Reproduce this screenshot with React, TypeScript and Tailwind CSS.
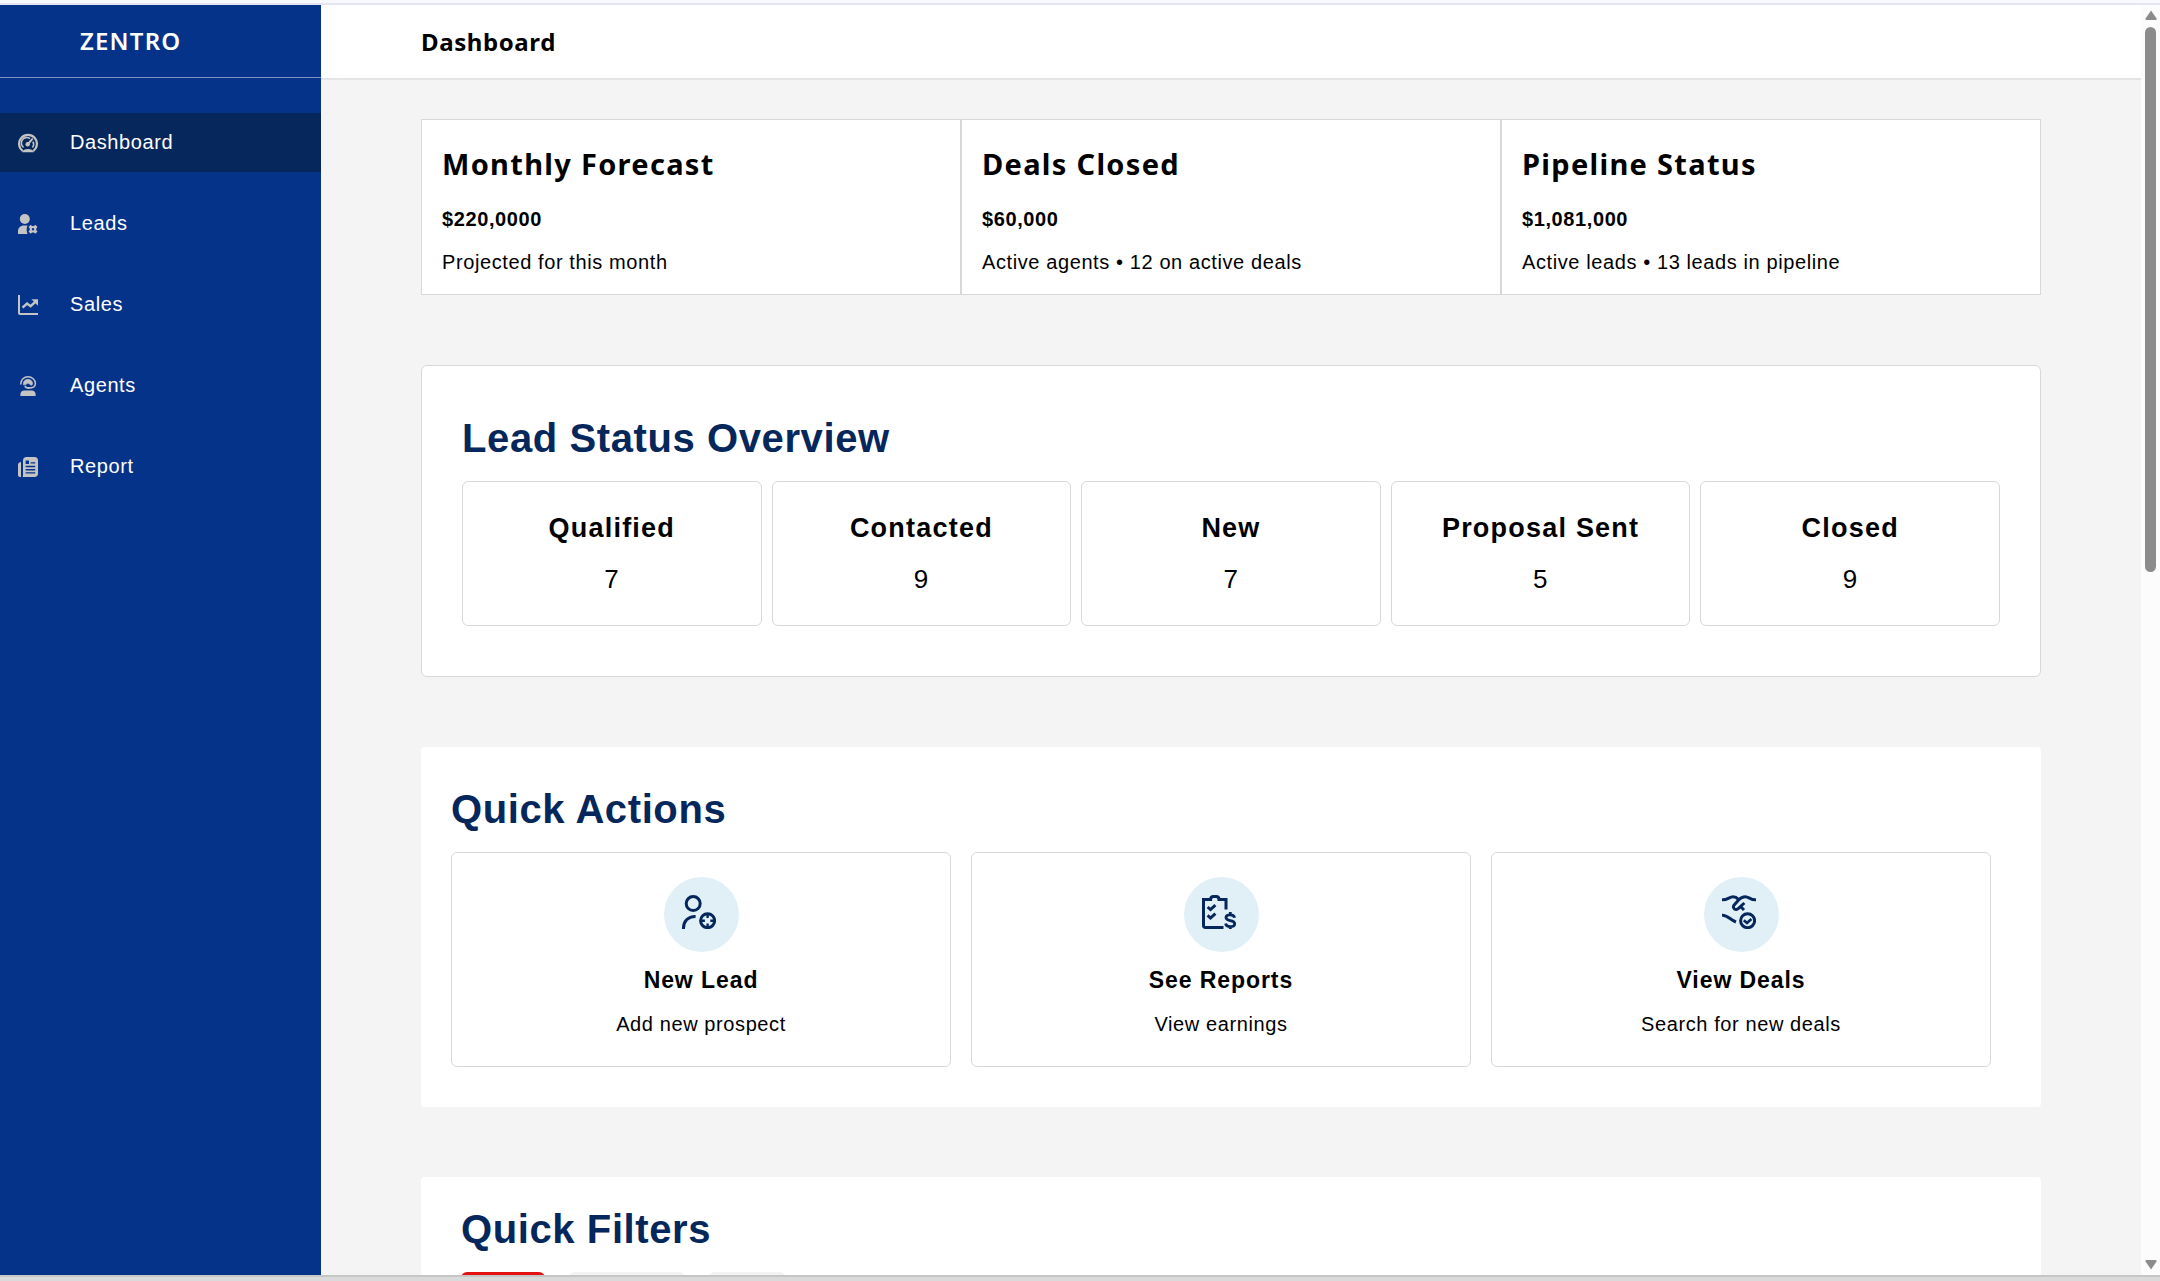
import type { ReactNode } from "react";

const GaugeIcon = () => (
  <svg viewBox="0 0 20 20" className="size-5" fill="none" stroke="currentColor" strokeWidth="2.2">
    <path d="M4.600 17.800A8.900 8.900 0 1 1 15.400 17.800" />
    <path d="M5.600 14.400A5.400 5.400 0 0 1 12 5.600M15 8.600A5.400 5.400 0 0 1 14.400 14.400" strokeWidth="1.600" />
    <path d="M10 11L14.200 6.200" strokeLinecap="round" strokeWidth="2" />
    <circle cx="9.700" cy="11.300" r="2.200" fill="currentColor" stroke="none" />
    <path d="M4 19.300C5.200 15 14.800 15 16 19.300Z" fill="currentColor" stroke="none" />
  </svg>
);

const LeadIcon = () => (
  <svg viewBox="0 0 20 20" className="size-5" fill="currentColor">
    <circle cx="6.800" cy="5" r="5" />
    <path d="M0 20V17.400C0 14 2.400 11.600 5.800 11.600H9.400C8.400 14.200 8.400 17.600 9.600 20Z" />
    <path
      d="M11.600 11.900L14 14.300M16 16.300L18.400 18.700M18.400 11.900L16 14.300M14 16.300L11.600 18.700"
      stroke="currentColor"
      strokeWidth="3.200"
    />
    <circle cx="15" cy="15.300" r="2.300" fill="none" stroke="currentColor" strokeWidth="2" />
  </svg>
);

const SalesIcon = () => (
  <svg viewBox="0 0 20 20" className="size-5" fill="none" stroke="currentColor" strokeWidth="2">
    <path d="M1 0V18Q1 19 2 19H20" />
    <path d="M4.500 12.600L9 8.600L12.600 11.200L17.600 6.600" strokeWidth="2.400" />
    <path d="M13.400 4.200H20V10.800Z" fill="currentColor" stroke="none" />
  </svg>
);

const AgentIcon = () => (
  <svg viewBox="0 0 20 20" className="size-5" fill="none" stroke="currentColor" strokeWidth="1.500" strokeLinecap="round">
    <path d="M2.800 8C2.800 3.600 6 .8 10 .8S17.400 3.800 17.400 7.400S14.800 12 10.600 12" />
    <path d="M5.400 8.400C5.200 5 7.200 3.600 10 3.600S14.800 5.200 14.400 8.400C13.600 9.400 12.800 9.200 11.800 8.200C10.400 6.800 8.800 6.800 7.600 8.800Z" fill="currentColor" strokeWidth=".8" />
    <path d="M7.400 10.800C8.400 11.800 9.400 12 10.600 12" strokeWidth="1.900" />
    <path d="M2.400 20V18.400C2.400 16 4 14.400 6.400 14.400H13.600C16 14.400 17.600 16 17.600 18.400V20Z" fill="currentColor" stroke="none" />
  </svg>
);

const ReportIcon = () => (
  <svg viewBox="0 0 20 20" className="size-5" fill="currentColor">
    <path d="M3 5V20H2C.8 20 0 19.200 0 18V8C0 6.400 1.200 5 3 5Z" />
    <path fillRule="evenodd" d="M8.400 0H16.600C18.800 0 20 1.400 20 3.400V16.600C20 18.800 18.800 20 16.600 20H4.600C5 19.400 5 18.800 5 18V3.400C5 1.400 6.400 0 8.400 0ZM7.600 3.400V7H11V3.400ZM12.600 5.200V6.600H17.200V5.200ZM7.600 8.800V10.200H17.200V8.800ZM7.600 12V13.400H17.200V12ZM7.600 15.200V16.600H17.200V15.200Z" />
  </svg>
);

const NewLeadIcon = () => (
  <svg viewBox="0 0 34 34" className="size-[34px]" fill="none" stroke="currentColor" strokeWidth="3">
    <circle cx="11.200" cy="8.600" r="7" />
    <path d="M1.500 34C1.200 26.500 6 21.200 13.600 21.400" />
    <circle cx="25.600" cy="25.700" r="7" />
    <path d="M25.600 18.700V23M25.600 28.400V32.700M18.600 25.700H22.900M28.300 25.700H32.600" strokeWidth="2.400" />
  </svg>
);

const ReportsIcon = () => (
  <svg viewBox="0 0 34 34" className="size-[34px]" fill="none" stroke="currentColor" strokeWidth="3">
    <path d="M21.500 32.500H3.400Q1.500 32.500 1.500 30.500V4.600H8.600C8.600 2.600 9.800 1.500 11.400 1.500H14.200C16 1.500 17 2.600 17 4.600H24V14.400" />
    <path d="M5.600 12L8.500 14.600L13.400 10.200M5.600 20.400L8.500 23L13.400 18.600" />
    <path d="M32.600 22.800C32.200 20.600 30.600 19.800 28.200 19.800C25.600 19.800 24 20.800 24 22.600C24 27 32.700 24 32.700 28.700C32.700 30.800 30.800 31.700 28.300 31.700C25.600 31.700 24 30.800 23.600 28.500M28.300 17V20M28.300 31.400V34" strokeWidth="2.800" />
  </svg>
);

const DealsIcon = () => (
  <svg viewBox="0 0 34 34" className="size-[34px]" fill="none" stroke="currentColor" strokeWidth="3">
    <path d="M0 4.800C5.400 5.200 7.400 1.700 11 1.700C13.400 1.700 15 2.800 16.600 4.600" />
    <path d="M34 4.800C28.600 5.200 27 1.700 23.200 1.700C20.400 1.700 18.400 3 16.800 4.800L12 10.200C10.600 12 12 14.800 14.400 14.600C16 14.400 16.600 13.200 22.400 8" />
    <path d="M18 11L22 15" />
    <path d="M0 20.200C5.400 19.800 8 24.600 14 27" />
    <circle cx="25.600" cy="25.700" r="7" />
    <path d="M21.800 25.200L25 28L29.400 24" strokeWidth="2.600" />
  </svg>
);

const navItems: { label: string; icon: ReactNode }[] = [
  { label: "Dashboard", icon: <GaugeIcon /> },
  { label: "Leads", icon: <LeadIcon /> },
  { label: "Sales", icon: <SalesIcon /> },
  { label: "Agents", icon: <AgentIcon /> },
  { label: "Report", icon: <ReportIcon /> },
];

const stats = [
  { title: "Monthly Forecast", value: "$220,0000", note: "Projected for this month" },
  { title: "Deals Closed", value: "$60,000", note: "Active agents • 12 on active deals" },
  { title: "Pipeline Status", value: "$1,081,000", note: "Active leads • 13 leads in pipeline" },
];

const statuses = [
  { label: "Qualified", count: 7 },
  { label: "Contacted", count: 9 },
  { label: "New", count: 7 },
  { label: "Proposal Sent", count: 5 },
  { label: "Closed", count: 9 },
];

const actions: { title: string; note: string; icon: ReactNode }[] = [
  { title: "New Lead", note: "Add new prospect", icon: <NewLeadIcon /> },
  { title: "See Reports", note: "View earnings", icon: <ReportsIcon /> },
  { title: "View Deals", note: "Search for new deals", icon: <DealsIcon /> },
];

function Sidebar() {
  return (
    <aside className="w-[321px] shrink-0 bg-[#06338a] text-white">
      <div className="flex h-[73px] items-center border-b border-[#8194c0] pl-20 font-['Noto_Sans'] text-2xl font-semibold tracking-wider">
        ZENTRO
      </div>
      <nav className="mt-[35px] flex flex-col gap-[22px]">
        {navItems.map((item, i) => (
          <a
            key={item.label}
            href="#"
            className={`flex h-[59px] items-center gap-8 pl-[18px] ${i === 0 ? "bg-[#06275b]" : ""}`}
          >
            <span className="text-[#c4c4c4]">{item.icon}</span>
            <span className="pb-0.5">{item.label}</span>
          </a>
        ))}
      </nav>
    </aside>
  );
}

function ScrollTrack() {
  return (
    <div className="flex w-[19px] shrink-0 flex-col items-center bg-[#fcfcfc] py-[5px]" aria-hidden="true">
      <svg viewBox="0 0 12 10" className="h-2.5 w-3" fill="#8b8b8b">
        <path d="M6 0.500L11.500 8.500Q12 10 10.500 10H1.500Q0 10 .5 8.500Z" />
      </svg>
      <div className="mt-[7px] h-[545px] w-[11px] rounded-full bg-[#8b8b8b]" />
      <svg viewBox="0 0 12 10" className="mt-auto h-2.5 w-3" fill="#8b8b8b">
        <path d="M6 9.500L.5 1.500Q0 0 1.500 0H10.500Q12 0 11.500 1.500Z" />
      </svg>
    </div>
  );
}

export default function App() {
  return (
    <div className="flex h-screen flex-col overflow-hidden bg-white font-['Liberation_Sans',sans-serif] text-xl/7 tracking-[0.03em] text-black">
      <div className="h-[5px] shrink-0 border-b-2 border-[#e4e5f1] bg-[#f8f9fe]" />
      <div className="flex min-h-0 flex-1">
        <Sidebar />
        <div className="flex min-w-0 flex-1 flex-col bg-[#f4f4f4]">
          <header className="flex h-[75px] shrink-0 items-center border-b-2 border-[#e4e4e4] bg-white px-[100px]">
            <h1 className="font-['Noto_Sans'] text-2xl font-bold">Dashboard</h1>
          </header>
          <main className="flex min-h-0 flex-1 flex-col gap-[70px] overflow-hidden px-[100px] pt-[39px]">
            <section className="grid shrink-0 grid-cols-3 bg-white">
              {stats.map((s) => (
                <div key={s.title} className="border border-[#d8d8d8] px-5 pt-6 pb-[18px]">
                  <h3 className="font-['Noto_Sans'] text-[29px]/10 font-bold tracking-[0.045em]">{s.title}</h3>
                  <p className="mt-[21px] font-bold">{s.value}</p>
                  <p className="mt-[15px]">{s.note}</p>
                </div>
              ))}
            </section>

            <section className="shrink-0 rounded-md border border-[#d8d8d8] bg-white px-10 pt-12 pb-[50px]">
              <h2 className="text-[40px]/12 font-bold text-[#06275b]">Lead Status Overview</h2>
              <div className="mt-[19px] grid grid-cols-5 gap-2.5 text-center">
                {statuses.map((s) => (
                  <div key={s.label} className="rounded-md border border-[#d8d8d8] py-[30px]">
                    <h3 className="text-[27px]/8 font-bold tracking-[0.045em]">{s.label}</h3>
                    <p className="mt-[19px] text-[26px]/8">{s.count}</p>
                  </div>
                ))}
              </div>
            </section>

            <section className="shrink-0 rounded-sm bg-white pt-[38px] pr-[50px] pb-10 pl-[30px]">
              <h2 className="text-[40px]/12 font-bold text-[#06275b]">Quick Actions</h2>
              <div className="mt-[19px] grid grid-cols-3 gap-5 text-center">
                {actions.map((a) => (
                  <button
                    key={a.title}
                    type="button"
                    className="flex flex-col items-center rounded-md border border-[#d8d8d8] pt-6 pb-7"
                  >
                    <span className="flex size-[75px] items-center justify-center rounded-full bg-[#e1f0f7] pr-1 pb-1.5 text-[#06275b]">
                      {a.icon}
                    </span>
                    <span className="mt-[13px] text-[23px]/[30px] font-bold tracking-[0.04em]">{a.title}</span>
                    <span className="mt-[15px] tracking-[0.03em]">{a.note}</span>
                  </button>
                ))}
              </div>
            </section>

            <section className="shrink-0 rounded-sm bg-white px-10 pt-7 pb-10">
              <h2 className="text-[40px]/12 font-bold text-[#06275b]">Quick Filters</h2>
              <div className="mt-[19px] flex gap-6">
                <span className="h-10 w-[84px] rounded-md bg-[#e21212]" />
                <span className="h-10 w-[116px] rounded-md bg-[#f4f2f2]" />
                <span className="h-10 w-[77px] rounded-md bg-[#f4f2f2]" />
              </div>
            </section>
          </main>
        </div>
        <ScrollTrack />
      </div>
      <div className="h-1.5 shrink-0 border-t-2 border-[#c6c6c6] bg-[#dadada]" />
    </div>
  );
}
